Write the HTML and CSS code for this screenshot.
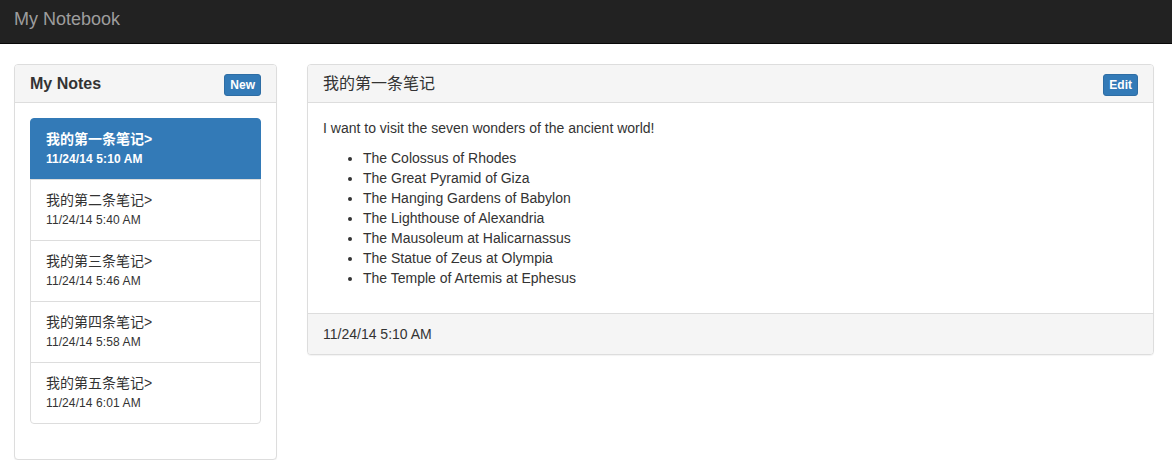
FILE: index.html
```html
<!DOCTYPE html>
<html lang="zh-CN">
<head>
<meta charset="utf-8">
<title>My Notebook</title>
<link rel="stylesheet" href="styles.css">
</head>
<body>
<nav class="navbar">
  <a class="brand" href="#">My Notebook</a>
</nav>
<div class="main">
  <aside class="panel side">
    <div class="panel-heading">
      <h3 class="panel-title bold">My Notes</h3>
      <button class="btn">New</button>
    </div>
    <div class="panel-body">
      <div class="list-group">
        <a class="item active" href="#"><div class="item-title">我的第一条笔记&gt;</div><div class="item-date">11/24/14 5:10 AM</div></a>
        <a class="item" href="#"><div class="item-title">我的第二条笔记&gt;</div><div class="item-date">11/24/14 5:40 AM</div></a>
        <a class="item" href="#"><div class="item-title">我的第三条笔记&gt;</div><div class="item-date">11/24/14 5:46 AM</div></a>
        <a class="item" href="#"><div class="item-title">我的第四条笔记&gt;</div><div class="item-date">11/24/14 5:58 AM</div></a>
        <a class="item" href="#"><div class="item-title">我的第五条笔记&gt;</div><div class="item-date">11/24/14 6:01 AM</div></a>
      </div>
    </div>
  </aside>
  <section class="panel content">
    <div class="panel-heading">
      <h3 class="panel-title">我的第一条笔记</h3>
      <button class="btn">Edit</button>
    </div>
    <div class="panel-body">
      <p class="intro">I want to visit the seven wonders of the ancient world!</p>
      <ul class="wonders">
        <li>The Colossus of Rhodes</li>
        <li>The Great Pyramid of Giza</li>
        <li>The Hanging Gardens of Babylon</li>
        <li>The Lighthouse of Alexandria</li>
        <li>The Mausoleum at Halicarnassus</li>
        <li>The Statue of Zeus at Olympia</li>
        <li>The Temple of Artemis at Ephesus</li>
      </ul>
    </div>
    <div class="panel-footer">11/24/14 5:10 AM</div>
  </section>
</div>
</body>
</html>
```
FILE: styles.css
```css
* { box-sizing: border-box; }
html, body { margin: 0; padding: 0; }
body {
  font-family: "Liberation Sans", "Noto Sans CJK SC", Arial, sans-serif;
  font-size: 14px;
  line-height: 20px;
  color: #333;
  background: #fff;
}
.navbar {
  height: 44px;
  background: #222;
  border-bottom: 1px solid #080808;
  padding: 9px 14px 0;
}
.brand {
  font-size: 18px;
  line-height: 20px;
  color: #9d9d9d;
  text-decoration: none;
}
.main {
  display: flex;
  align-items: flex-start;
  gap: 30px;
  padding: 20px 0 0 14px;
}
.panel {
  background: #fff;
  border: 1px solid #ddd;
  border-radius: 4px;
  box-shadow: 0 1px 1px rgba(0,0,0,.05);
  overflow: hidden;
}
.side { width: 263px; }
.content { width: 847px; }
.panel-heading {
  display: flex;
  justify-content: space-between;
  align-items: center;
  height: 38px;
  padding: 0 15px;
  background: #f5f5f5;
  border-bottom: 1px solid #ddd;
}
.panel-title {
  margin: 0;
  font-size: 16px;
  font-weight: normal;
  line-height: 18px;
  color: #333;
}
.panel-title.bold { font-weight: bold; }
.btn {
  font-family: "Liberation Sans", Arial, sans-serif;
  font-size: 12px;
  font-weight: bold;
  line-height: 18px;
  padding: 1px 5px;
  color: #fff;
  background: #337ab7;
  border: 1px solid #2e6da4;
  border-radius: 3px;
  margin-top: 2px;
}
.panel-body { padding: 15px; }
.list-group { margin-bottom: 20px; }
.item {
  display: block;
  padding: 10px 15px;
  border: 1px solid #ddd;
  margin-bottom: -1px;
  color: #333;
  text-decoration: none;
  height: 62px;
}
.item:first-child { border-top-left-radius: 4px; border-top-right-radius: 4px; }
.item:last-child { border-bottom-left-radius: 4px; border-bottom-right-radius: 4px; margin-bottom: 0; }
.item.active {
  background: #337ab7;
  border-color: #337ab7;
  color: #fff;
  font-weight: bold;
}
.item-title { font-size: 14px; line-height: 20px; }
.item-date { font-size: 12px; line-height: 17px; margin-top: 2px; letter-spacing: 0.1px; }
.intro { margin: 0 0 10px; }
.wonders { margin: 0 0 10px; padding-left: 40px; }
.panel-footer {
  padding: 10px 15px;
  background: #f5f5f5;
  border-top: 1px solid #ddd;
}
```
